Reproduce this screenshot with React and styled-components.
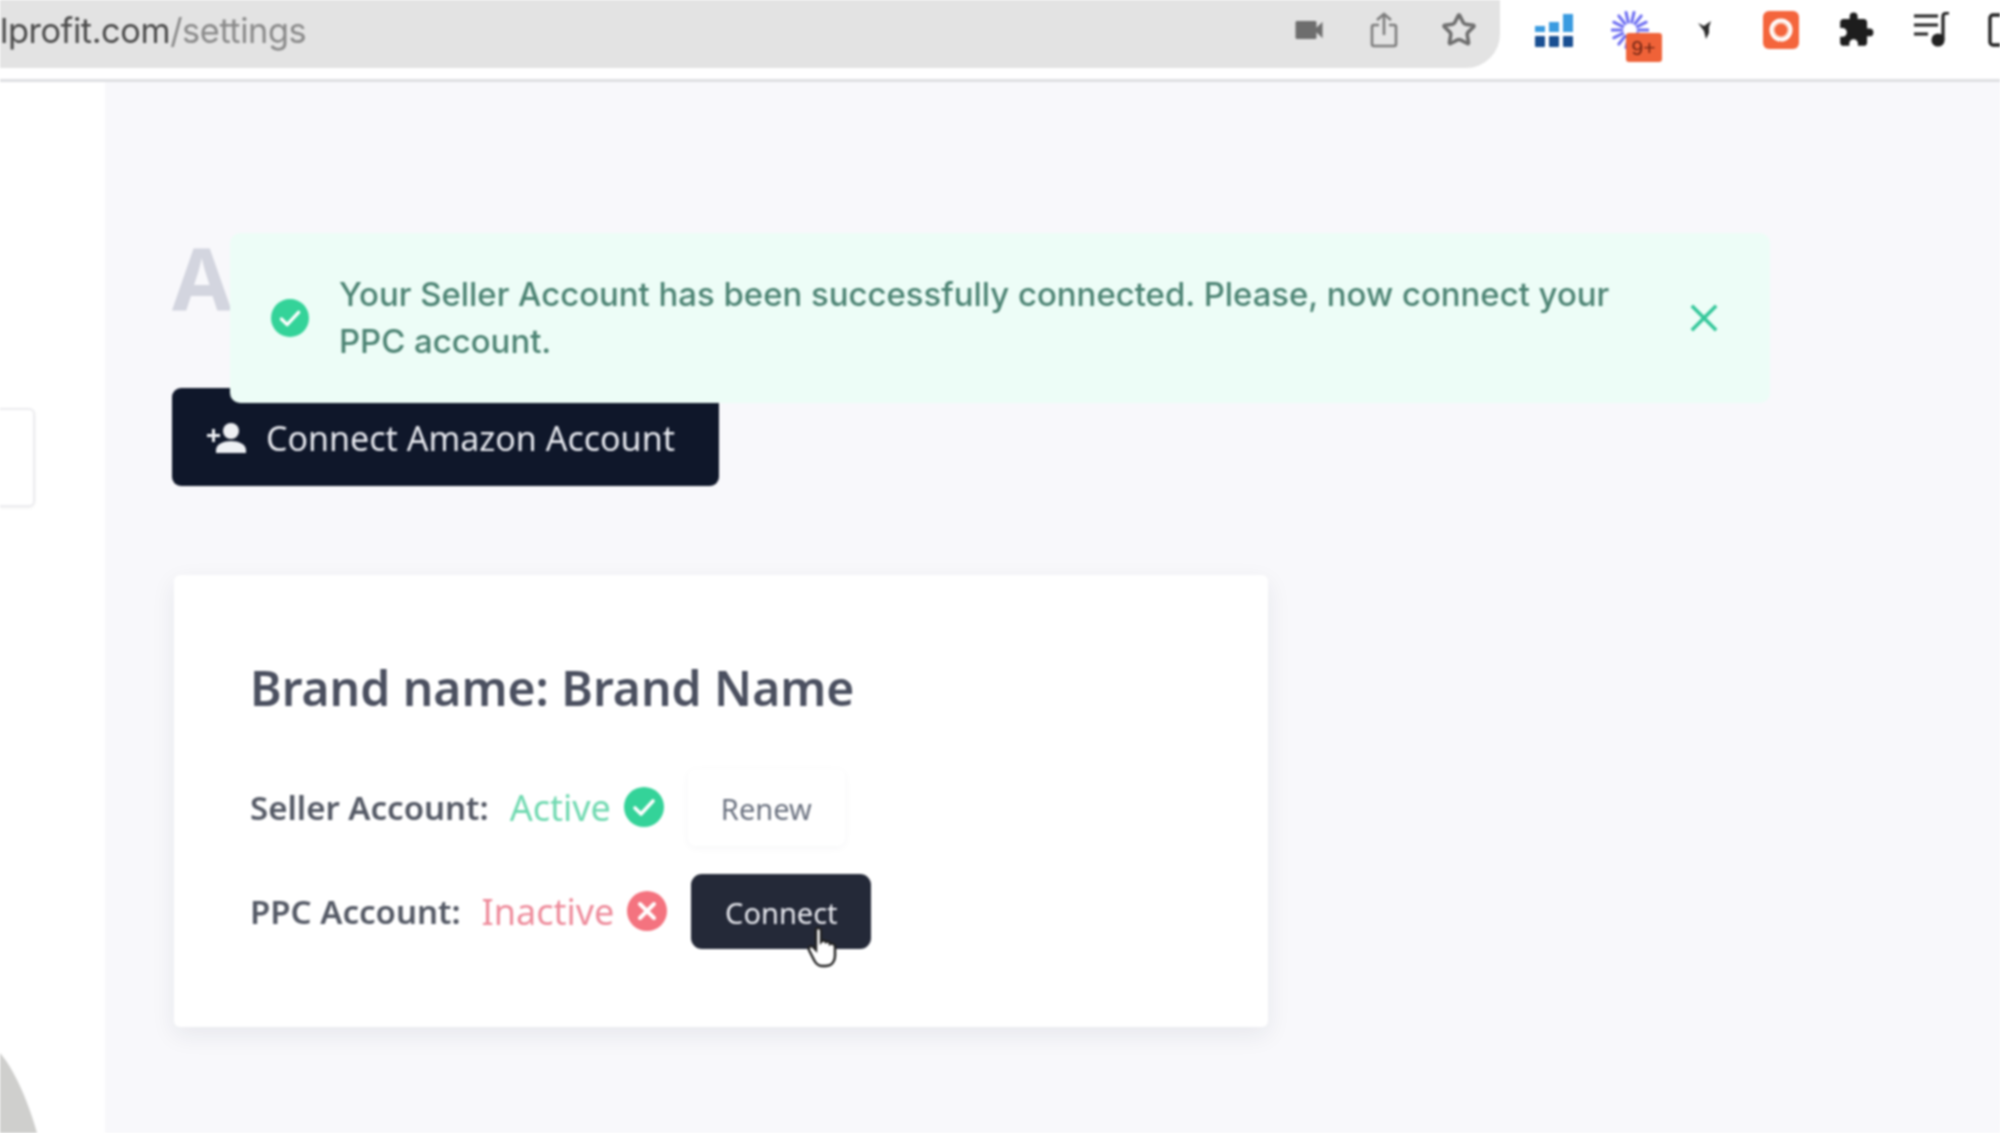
import React from 'react';
import styled, { createGlobalStyle } from 'styled-components';
import { MdExtension, MdVideocam } from 'react-icons/md';
import { LuStar } from 'react-icons/lu';

const GlobalStyle = createGlobalStyle`
  html, body {
    margin: 0;
    padding: 0;
    background: #fff;
  }
  body {
    font-family: "Noto Sans", sans-serif;
  }
`;

const Page = styled.div`
  width: 2000px;
  height: 1133px;
  overflow: hidden;
  display: flex;
  flex-direction: column;
  filter: blur(0.8px);
`;

const BrowserBar = styled.header`
  flex: 0 0 82px;
  box-sizing: border-box;
  height: 82px;
  background: #fff;
  border-bottom: 3px solid #dedfe2;
  display: flex;
  align-items: flex-start;
`;

const UrlPill = styled.div`
  width: 1500px;
  height: 68px;
  background: #e3e3e3;
  border-bottom-right-radius: 34px;
  display: flex;
  align-items: center;
  justify-content: space-between;
  padding: 0 23px 8px 0;
  box-sizing: border-box;
`;

const UrlText = styled.div`
  font-family: "Inter", sans-serif;
  font-size: 34.3px;
  letter-spacing: -0.4px;
  color: #4a4a4a;
  span {
    color: #8a8a8a;
  }
`;

const UrlActions = styled.div`
  display: flex;
  align-items: center;
  gap: 42px;
  color: #6e6e6e;
`;

const ExtensionTray = styled.div`
  flex: 1;
  display: flex;
  align-items: flex-start;
  gap: 37.5px;
  height: 68px;
  padding: 10px 0 0 35px;
  overflow: hidden;
`;

const ExtensionSlot = styled.div`
  position: relative;
  flex: 0 0 auto;
  display: flex;
  align-items: center;
  justify-content: center;
  width: ${(p) => p.$w || 38}px;
  height: 40px;
  color: #1d1d1d;
`;

const CountBadge = styled.span`
  position: absolute;
  left: 15px;
  top: 23px;
  width: 36px;
  height: 29px;
  background: #ef6238;
  border-radius: 3px;
  color: #6e2413;
  font-family: "Liberation Sans", sans-serif;
  font-size: 21px;
  line-height: 29px;
  text-align: center;
`;

const Body = styled.div`
  flex: 1;
  display: flex;
  min-height: 0;
`;

const Sidebar = styled.aside`
  position: relative;
  flex: 0 0 105px;
  background: #fff;
  padding-top: 326px;
  box-sizing: border-box;
`;

const SidebarTab = styled.div`
  width: 35px;
  height: 99px;
  box-sizing: border-box;
  background: #fff;
  border: 2px solid #ececef;
  border-left: 0;
  border-radius: 0 6px 6px 0;
  box-shadow: 0 1px 3px rgba(0, 0, 0, 0.06);
`;

const WebcamEdge = styled.svg`
  position: absolute;
  left: 0;
  bottom: 0;
`;

const Main = styled.main`
  position: relative;
  flex: 1;
  background: #f8f8fb;
  padding: 150px 0 0 67px;
`;

const Heading = styled.h1`
  margin: 0;
  font-size: 86px;
  line-height: 92px;
  font-weight: 700;
  color: #d3d5df;
  height: 156px;
`;

const ConnectAccountButton = styled.button`
  display: flex;
  align-items: center;
  gap: 18px;
  width: 547px;
  height: 98px;
  padding: 2px 0 0 35px;
  box-sizing: border-box;
  border: 0;
  border-radius: 9px;
  background: #0f172a;
  color: #e6e8ee;
  font-family: "Noto Sans", sans-serif;
  font-size: 34px;
`;

const Alert = styled.div`
  position: absolute;
  left: 125px;
  top: 151px;
  width: 1540px;
  height: 170px;
  box-sizing: border-box;
  border-radius: 10px;
  background: #edfdf7;
  display: flex;
  align-items: center;
  padding: 0 51px 0 41px;
  gap: 30px;
`;

const AlertText = styled.p`
  flex: 1;
  margin: 0;
  font-family: "Inter", sans-serif;
  font-size: 32.9px;
  font-weight: 500;
  line-height: 47px;
  color: #4d8474;
`;

const Card = styled.section`
  box-sizing: border-box;
  width: 1094px;
  height: 452px;
  margin: 89px 0 0 2px;
  padding: 83px 76px 0;
  background: #fff;
  border-radius: 6px;
  box-shadow: 0 8px 24px rgba(30, 40, 70, 0.08);
`;

const CardTitle = styled.h2`
  margin: 0 0 49px;
  font-size: 48px;
  line-height: 60px;
  font-weight: 600;
  color: #4b5060;
`;

const StatusRow = styled.div`
  display: flex;
  align-items: center;
  height: 80px;
  margin-bottom: 24px;
  font-size: 33px;
`;

const StatusLabel = styled.span`
  font-weight: 600;
  color: #555a66;
  margin-right: 21px;
`;

const StatusValue = styled.span`
  font-size: 36px;
  color: ${(p) => (p.$active ? '#6fd9b0' : '#ee8c9c')};
  margin-right: 13px;
`;

const StatusIcon = styled.svg`
  flex: 0 0 auto;
  margin-right: ${(p) => p.$gap}px;
`;

const RenewButton = styled.button`
  width: 157px;
  height: 77px;
  padding-top: 4px;
  border: 0;
  border-radius: 8px;
  background: #fff;
  color: #6b7280;
  font-family: "Noto Sans", sans-serif;
  font-size: 29px;
  box-shadow: 0 2px 8px rgba(30, 40, 70, 0.04);
`;

const ConnectButton = styled.button`
  position: relative;
  width: 180px;
  height: 75px;
  padding-top: 3px;
  border: 0;
  border-radius: 11px;
  background: #242938;
  color: #e8e9ef;
  font-family: "Noto Sans", sans-serif;
  font-size: 29px;
`;

const Pointer = styled.svg`
  position: absolute;
  left: 116px;
  top: 52px;
`;

const METER_BARS = [
  [0, 6],
  [14, 10],
  [28, 18]
];

const ShareIcon = () => (
  <svg width="30" height="38" viewBox="0 0 30 38" fill="none" stroke="#7d7d7d" strokeWidth="2.6">
    <path d="M10 14H5a2 2 0 0 0-2 2v17a2 2 0 0 0 2 2h20a2 2 0 0 0 2-2V16a2 2 0 0 0-2-2h-5" />
    <path d="M15 24V3M8 9l7-6 7 6" />
  </svg>
);

const MeterIcon = () => (
  <svg width="38" height="36" viewBox="0 0 38 36">
    {METER_BARS.map(([x, h]) => (
      <React.Fragment key={x}>
        <rect x={x} y={20 - h} width="10" height={h} fill="#3a9be0" />
        <rect x={x} y="24" width="10" height="11" rx="1" fill="#1a4f92" />
      </React.Fragment>
    ))}
  </svg>
);

const SpinnerIcon = () => (
  <svg width="38" height="38" viewBox="0 0 38 38" stroke="#6d6ef2" strokeWidth="3" strokeLinecap="round">
    {Array.from({ length: 14 }).map((_, i) => {
      const a = (i / 14) * Math.PI * 2;
      return (
        <line
          key={i}
          x1={19 + Math.cos(a) * 8}
          y1={19 + Math.sin(a) * 8}
          x2={19 + Math.cos(a) * 18}
          y2={19 + Math.sin(a) * 18}
        />
      );
    })}
  </svg>
);

const ArrowIcon = () => (
  <svg width="14" height="20" viewBox="0 0 14 20">
    <path d="M0 3l6 3 7-5-2 6v6l-3 6-2-8z" fill="#2c2c2c" />
  </svg>
);

const RecordIcon = () => (
  <svg width="36" height="38" viewBox="0 0 36 38">
    <rect width="36" height="38" rx="6" fill="#f4653c" />
    <circle cx="18" cy="19" r="10" fill="#fbd9cc" stroke="#fff" strokeWidth="3" />
    <circle cx="18" cy="19" r="6.5" fill="#f4653c" />
  </svg>
);

const QueueIcon = () => (
  <svg width="38" height="36" viewBox="0 0 38 36" fill="none" stroke="#222" strokeWidth="3.2">
    <path d="M1 4h24M1 13h24M1 22h14" />
    <path d="M30 28V4c0-2 2-3 6-3" />
    <circle cx="25" cy="28" r="5" fill="#222" />
  </svg>
);

const PanelIcon = () => (
  <svg width="20" height="34" viewBox="0 0 20 34" fill="none" stroke="#222" strokeWidth="3.4">
    <rect x="2" y="2" width="30" height="30" rx="3" />
  </svg>
);

const PersonPlusIcon = () => (
  <svg width="41" height="30" viewBox="0 0 41 30" fill="#eef0f4">
    <circle cx="24" cy="8" r="8" />
    <path d="M9 30v-3c0-6 8-9 15-9s15 3 15 9v3z" />
    <path d="M5 6h3v5h5v3H8v5H5v-5H0v-3h5z" />
  </svg>
);

const CheckBadge = ({ size, gap }) => (
  <StatusIcon $gap={gap} width={size} height={size} viewBox="0 0 40 40">
    <circle cx="20" cy="20" r="20" fill="#34d399" />
    <path d="M11 21l6 6 12-13" fill="none" stroke="#fff" strokeWidth="3.6" strokeLinecap="round" strokeLinejoin="round" />
  </StatusIcon>
);

const CrossBadge = ({ size, gap }) => (
  <StatusIcon $gap={gap} width={size} height={size} viewBox="0 0 40 40">
    <circle cx="20" cy="20" r="20" fill="#f4737f" />
    <path d="M13 13l14 14M27 13L13 27" fill="none" stroke="#fff" strokeWidth="4" strokeLinecap="round" />
  </StatusIcon>
);

const CloseIcon = () => (
  <svg width="30" height="30" viewBox="0 0 32 32" fill="none" stroke="#34c79a" strokeWidth="3.8">
    <path d="M3 3l26 26M29 3L3 29" />
  </svg>
);

const HandCursor = () => (
  <Pointer width="34" height="42" viewBox="0 0 34 42">
    <path
      d="M9 3c2-2 5-1 5 2v11l1-1c2-1 4 0 4 1 2-1 4 0 4 2 2-1 5 0 5 3v9c0 5-3 10-9 10h-4c-4 0-6-2-8-6L2 24c-1-3 2-5 4-3l3 3z"
      fill="#fff"
      stroke="#222"
      strokeWidth="2.4"
    />
  </Pointer>
);

export default function App() {
  return (
    <>
      <GlobalStyle />
      <Page>
        <BrowserBar>
          <UrlPill>
            <UrlText>
              lprofit.com<span>/settings</span>
            </UrlText>
            <UrlActions>
              <MdVideocam size={36} />
              <ShareIcon />
              <LuStar size={36} strokeWidth={2.4} />
            </UrlActions>
          </UrlPill>
          <ExtensionTray>
            <ExtensionSlot><MeterIcon /></ExtensionSlot>
            <ExtensionSlot>
              <SpinnerIcon />
              <CountBadge>9+</CountBadge>
            </ExtensionSlot>
            <ExtensionSlot><ArrowIcon /></ExtensionSlot>
            <ExtensionSlot><RecordIcon /></ExtensionSlot>
            <ExtensionSlot><MdExtension size={40} /></ExtensionSlot>
            <ExtensionSlot><QueueIcon /></ExtensionSlot>
            <ExtensionSlot $w={20}><PanelIcon /></ExtensionSlot>
          </ExtensionTray>
        </BrowserBar>
        <Body>
          <Sidebar>
            <SidebarTab />
            <WebcamEdge width="40" height="80" viewBox="0 0 40 80">
              <path d="M0 0C14 16 28 48 37 80H0z" fill="#cfcfcd" />
            </WebcamEdge>
          </Sidebar>
          <Main>
            <Heading>A</Heading>
            <ConnectAccountButton>
              <PersonPlusIcon />
              Connect Amazon Account
            </ConnectAccountButton>
            <Alert>
              <CheckBadge size={38} gap={0} />
              <AlertText>
                Your Seller Account has been successfully connected. Please, now connect your PPC account.
              </AlertText>
              <CloseIcon />
            </Alert>
            <Card>
              <CardTitle>Brand name: Brand Name</CardTitle>
              <StatusRow>
                <StatusLabel>Seller Account:</StatusLabel>
                <StatusValue $active>Active</StatusValue>
                <CheckBadge size={40} gap={24} />
                <RenewButton>Renew</RenewButton>
              </StatusRow>
              <StatusRow>
                <StatusLabel>PPC Account:</StatusLabel>
                <StatusValue>Inactive</StatusValue>
                <CrossBadge size={40} gap={24} />
                <ConnectButton>
                  Connect
                  <HandCursor />
                </ConnectButton>
              </StatusRow>
            </Card>
          </Main>
        </Body>
      </Page>
    </>
  );
}
